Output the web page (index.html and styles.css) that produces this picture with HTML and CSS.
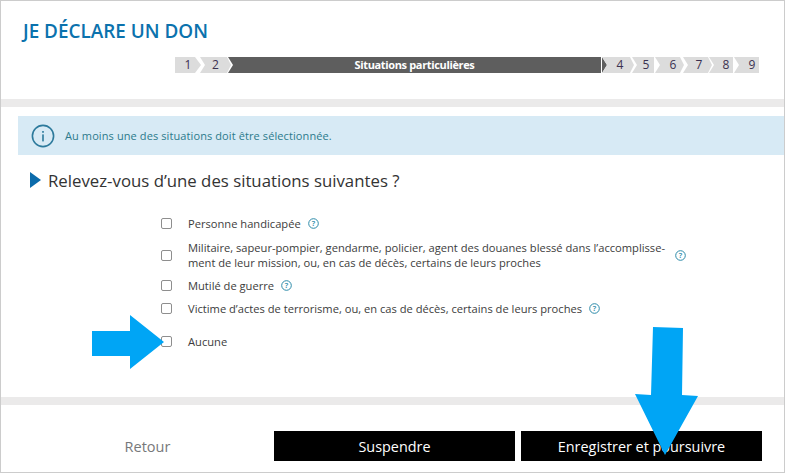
FILE: index.html

```html
<!DOCTYPE html>
<html lang="fr">
<head>
    <meta charset="UTF-8">
    <meta name="viewport" content="width=device-width, initial-scale=1.0">
    <title>Je déclare un don</title>
    <link rel="stylesheet" href="styles.css">
</head>
<body>
    <div class="frame">
        <header class="top">
            <h1 class="title">JE DÉCLARE UN DON</h1>
            <div class="steps">
                <span class="step step-1">1</span>
                <span class="step step-2">2</span>
                <span class="step-current">Situations particulières</span>
                <span class="step-tip"></span>
                <span class="step step-4">4</span>
                <span class="step step-5">5</span>
                <span class="step step-6">6</span>
                <span class="step step-7">7</span>
                <span class="step step-8">8</span>
                <span class="step step-9">9</span>
            </div>
        </header>

        <div class="band"></div>

        <main class="content">
            <div class="info">
                <svg class="info-icon" width="24" height="24" viewBox="0 0 24 24">
                    <circle cx="12" cy="12" r="10.6" fill="none" stroke="#2c7a9c" stroke-width="1.6"/>
                    <rect x="11.2" y="10.4" width="1.6" height="7" fill="#2c7a9c"/>
                    <rect x="11.2" y="7" width="1.6" height="1.8" fill="#2c7a9c"/>
                </svg>
                <span>Au moins une des situations doit être sélectionnée.</span>
            </div>

            <h2 class="question">Relevez-vous d’une des situations suivantes ?</h2>

            <ul class="choices">
                <li class="choice">
                    <input type="checkbox">
                    <label>Personne handicapée</label>
                    <svg class="help" width="11" height="11" viewBox="0 0 11 11"><circle cx="5.5" cy="5.5" r="4.8" fill="none" stroke="#2c8aa8"/><text x="5.5" y="8" text-anchor="middle" class="help-mark">?</text></svg>
                </li>
                <li class="choice choice-long">
                    <input type="checkbox">
                    <label>Militaire, sapeur-pompier, gendarme, policier, agent des douanes blessé dans l’accomplisse-<br>ment de leur mission, ou, en cas de décès, certains de leurs proches</label>
                    <svg class="help" width="11" height="11" viewBox="0 0 11 11"><circle cx="5.5" cy="5.5" r="4.8" fill="none" stroke="#2c8aa8"/><text x="5.5" y="8" text-anchor="middle" class="help-mark">?</text></svg>
                </li>
                <li class="choice">
                    <input type="checkbox">
                    <label>Mutilé de guerre</label>
                    <svg class="help" width="11" height="11" viewBox="0 0 11 11"><circle cx="5.5" cy="5.5" r="4.8" fill="none" stroke="#2c8aa8"/><text x="5.5" y="8" text-anchor="middle" class="help-mark">?</text></svg>
                </li>
                <li class="choice">
                    <input type="checkbox">
                    <label>Victime d’actes de terrorisme, ou, en cas de décès, certains de leurs proches</label>
                    <svg class="help" width="11" height="11" viewBox="0 0 11 11"><circle cx="5.5" cy="5.5" r="4.8" fill="none" stroke="#2c8aa8"/><text x="5.5" y="8" text-anchor="middle" class="help-mark">?</text></svg>
                </li>
                <li class="choice choice-none">
                    <input type="checkbox">
                    <label>Aucune</label>
                </li>
            </ul>
        </main>

        <div class="band"></div>

        <footer class="actions">
            <a class="back">Retour</a>
            <button class="btn">Suspendre</button>
            <button class="btn">Enregistrer et poursuivre</button>
        </footer>
    </div>

    <!-- fleches ajoutees par dessus la capture -->
    <svg class="arrow arrow-right" width="72" height="55" viewBox="0 0 72 55">
        <polygon points="0,16 38,16 38,0 72,27 38,54 38,41 0,41" fill="#00a5f5"/>
    </svg>
    <svg class="arrow arrow-down" width="64" height="129" viewBox="0 0 64 129">
        <polygon points="18,0 48,1 47,68 63,69 30,128 0,67 16,68" fill="#00a5f5"/>
    </svg>
</body>
</html>
```

FILE: styles.css

```css
* {
    box-sizing: border-box;
}
body {
    margin: 0;
    font-family: "Open Sans", "Liberation Sans", sans-serif;
    color: #3c3c3c;
}
.frame {
    width: 785px;
    height: 473px;
    border: 1px solid #ccc;
    overflow: hidden;
    display: flex;
    flex-direction: column;
}
.top {
    height: 98px;
    padding: 17px 0 0 21px;
}
.title {
    margin: 0;
    padding-left: 1px;
    font-size: 18.9px;
    line-height: 26px;
    font-weight: 600;
    color: #0b72ad;
}
.steps {
    display: flex;
    height: 16px;
    margin: 13px 0 0 153px;
    font-size: 12px;
    line-height: 16px;
    color: #3b3150;
}
.step {
    text-align: center;
    background: #dcdcdc;
    clip-path: polygon(0 0, calc(100% - 4px) 0, 100% 50%, calc(100% - 4px) 100%, 0 100%, 5px 50%);
}
.step-1 {
    width: 26px;
    clip-path: polygon(0 0, 20px 0, 100% 50%, 20px 100%, 0 100%);
}
.step-2 {
    width: 31px;
    margin-left: -1px;
}
.step-4 {
    width: 32px;
    margin-left: -5px;
    padding-left: 4px;
}
.step-5, .step-8, .step-9 {
    clip-path: polygon(0 0, 100% 0, 100% 100%, 0 100%, 5px 50%);
}
.step-5 {
    width: 22px;
    margin-left: -2px;
    padding-left: 6px;
}
.step-6 {
    width: 29px;
    margin-left: 1px;
    padding-left: 7px;
}
.step-7 {
    width: 29px;
    margin-left: -1px;
    padding-left: 3px;
}
.step-8 {
    width: 24px;
    margin-left: -3px;
    padding-left: 10px;
}
.step-9 {
    width: 25px;
    margin-left: 1px;
    padding-left: 11px;
}
.step-current {
    width: 373px;
    margin-left: -3px;
    text-align: center;
    font-weight: 700;
    font-size: 11px;
    letter-spacing: -0.35px;
    color: #fff;
    background: #5e5e5e;
    clip-path: polygon(0 0, 100% 0, 100% 100%, 0 100%, 5px 50%);
}
.step-tip {
    width: 5px;
    margin-left: 1px;
    background: #5e5e5e;
    clip-path: polygon(0 0, 100% 50%, 0 100%);
}
.band {
    flex: none;
    height: 8px;
    background: #ebeaea;
}
.content {
    flex: 1;
    padding: 9px 0 0 17px;
}
.info {
    display: flex;
    align-items: center;
    height: 39px;
    padding-left: 13px;
    gap: 10px;
    font-size: 11px;
    letter-spacing: 0.1px;
    color: #2c7a8c;
    background: #d7eaf5;
}
.question {
    position: relative;
    margin: 14px 0 0;
    padding-left: 30px;
    font-size: 16.8px;
    line-height: 24px;
    font-weight: 400;
    color: #333;
}
.question::before {
    content: "";
    position: absolute;
    left: 12px;
    top: 3px;
    border-style: solid;
    border-width: 8px 0 8px 11px;
    border-color: transparent transparent transparent #0b6bab;
}
.choices {
    list-style: none;
    margin: 20px 0 0;
    padding: 0 0 0 143px;
    font-size: 11.15px;
    line-height: 15px;
}
.choice {
    display: flex;
    align-items: center;
    height: 20px;
    margin-top: 3px;
}
.choice input {
    appearance: none;
    flex: none;
    width: 11px;
    height: 11px;
    margin: 0 16px 0 0;
    border: 1px solid #8e8e8e;
    border-radius: 2px;
    background: #fff;
}
.choice-long {
    height: 38px;
}
.choice-long + .choice {
    margin-top: 1px;
}
.choice-none {
    margin-top: 13px;
}
.help {
    flex: none;
    margin-left: 7px;
}
.choice-long .help {
    margin-left: 10px;
}
.help-mark {
    font-size: 7.5px;
    font-weight: 600;
    fill: #2c8aa8;
}
.actions {
    flex: none;
    display: flex;
    align-items: center;
    height: 67px;
    padding: 26px 0 11px 0;
}
.back {
    width: 273px;
    padding-left: 20px;
    text-align: center;
    font-size: 14.5px;
    color: #77787a;
}
.btn {
    width: 241px;
    height: 30px;
    margin-right: 6px;
    padding: 0;
    border: none;
    font-family: inherit;
    font-size: 14.4px;
    color: #fff;
    background: #000;
}
.arrow {
    position: absolute;
}
.arrow-right {
    left: 92px;
    top: 315px;
}
.arrow-down {
    left: 635px;
    top: 327px;
}
```
